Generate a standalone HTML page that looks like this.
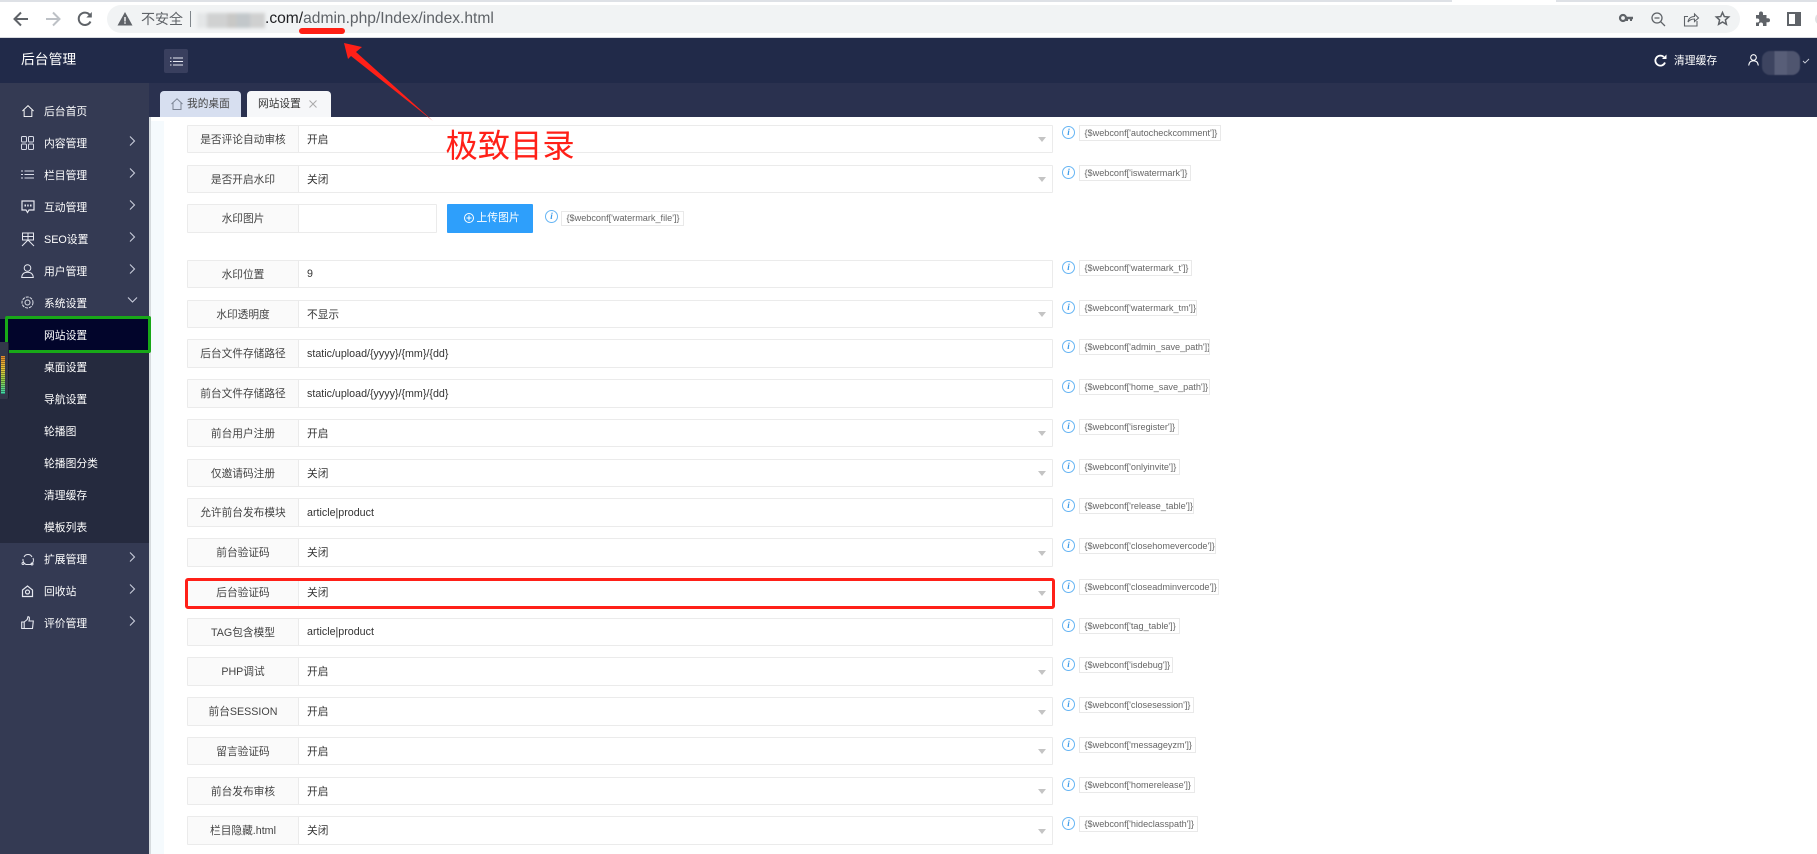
<!DOCTYPE html>
<html lang="zh"><head><meta charset="utf-8"><title>后台管理</title>
<style>
*{box-sizing:border-box;margin:0;padding:0}
html,body{width:1817px;height:854px;overflow:hidden;background:#fff}
body{position:relative;font-family:"Liberation Sans","Noto Sans CJK SC",sans-serif;font-size:10.7px;color:#333;filter:blur(.25px)}
.p{position:absolute}
svg{position:absolute;overflow:visible}
.n{position:absolute;left:44px;color:#fff;line-height:16px;white-space:nowrap;font-size:10.8px;margin-top:1px}
.ch{position:absolute;left:128px;width:9px;height:12px}
.r{position:absolute;left:187px;width:866px;background:#fff;border:1px solid #ebebeb;border-radius:1px}
.l{position:absolute;left:0;top:0;bottom:0;width:111px;background:#fafafa;border-right:1px solid #ebebeb;text-align:center;color:#444;white-space:nowrap;display:flex;align-items:center;justify-content:center}
.v{position:absolute;left:119px;top:0;bottom:0;display:flex;align-items:center;color:#333;white-space:nowrap}
.a{position:absolute;left:850px;top:50%;margin-top:-2px;width:0;height:0;border-left:4px solid transparent;border-right:4px solid transparent;border-top:5px solid #c4c4c4}
.i{position:absolute;left:874px;top:0px;width:13px;height:13px;border:1px solid #66b5f4;border-radius:50%;color:#3d9be9;font:italic bold 9px/11px "Liberation Serif",serif;text-align:center}
.t{position:absolute;left:891px;top:-1px;height:16px;border:1px solid #e9e9e9;background:#fff;color:#666;font-size:9.15px;line-height:14px;padding-left:4.5px;white-space:nowrap;overflow:hidden}
</style></head><body>

<!-- browser chrome -->
<div class="p" style="left:0;top:0;width:1817px;height:38px;background:#fff;border-bottom:1px solid #d8dadf"></div>
<div class="p" style="left:0;top:0;width:1817px;height:2px;background:#dee1e6"></div>
<div class="p" style="left:1452px;top:0;width:104px;height:2px;background:#fff"></div>
<svg style="left:13px;top:11px" width="16" height="16" fill="none" stroke="#5f6368" stroke-width="2"><path d="M15 8H2M8 1.500 1.500 8 8 14.500"/></svg>
<svg style="left:45px;top:11px" width="16" height="16" fill="none" stroke="#bdc1c6" stroke-width="2"><path d="M1 8h13M8 1.500 14.500 8 8 14.500"/></svg>
<svg style="left:77px;top:11px" width="16" height="16" fill="none" stroke="#5f6368" stroke-width="2"><path d="M13.500 10.500A6.200 6.200 0 1 1 12.700 3.800"/><path d="M14.800 1v5.500H9.300" fill="#5f6368" stroke="none"/></svg>
<div class="p" style="left:107px;top:5px;width:1633px;height:28px;border-radius:14px;background:#f1f3f4"></div>
<svg style="left:117px;top:12px" width="16" height="14"><path d="M8 0 15.500 13.500H.5z" fill="#5f6368"/><path d="M7.300 5h1.400v4.500H7.300zM7.300 10.300h1.400v1.500H7.300z" fill="#fff"/></svg>
<div class="p" style="left:141px;top:10px;font-size:14px;line-height:18px;color:#5f6368;white-space:nowrap">不安全</div>
<div class="p" style="left:190px;top:11px;width:1px;height:16px;background:#80868b"></div>
<div class="p" style="left:197px;top:13px;width:68px;height:15px;background:linear-gradient(90deg,#e4e6e7 0 15%,#d0d1d1 15% 45%,#c8c8c6 45% 58%,#c2c7ca 58% 78%,#cfd0d0 78%);filter:blur(1.5px)"></div>
<div class="p" style="left:265px;top:9px;font-size:15.6px;line-height:20px;color:#202124;white-space:nowrap">.com/<span style="color:#5f6368">admin.php/Index/index.html</span></div>
<div class="p" style="left:299px;top:28px;width:46px;height:6px;border-radius:3px;background:#ff1f14"></div>
<!-- right chrome icons -->
<svg style="left:1619px;top:13px" width="14" height="10" fill="#5f6368"><circle cx="4" cy="5" r="3" fill="none" stroke="#5f6368" stroke-width="2.200"/><path d="M7 3.800h7v2.400h-1V8h-2V6.200H9V8H7z"/></svg>
<svg style="left:1651px;top:12px" width="15" height="15" fill="none" stroke="#5f6368" stroke-width="1.300"><circle cx="6" cy="6" r="5"/><path d="M9.800 9.800 14 14M3.500 6h5"/></svg>
<svg style="left:1683px;top:12px" width="16" height="15" fill="none" stroke="#5f6368" stroke-width="1.100"><path d="M14 9v5H1.500V4.500H5M5 10c.5-3.500 3-5.500 6.500-5.500V2L15.500 6l-4 3.500V7c-3 0-5 1-6.500 3z"/></svg>
<svg style="left:1715px;top:11px" width="15" height="15" fill="none" stroke="#5f6368" stroke-width="1.500"><path d="M7.500 1.500 9.300 5.600l4.400.4-3.300 2.900 1 4.400-3.900-2.300-3.900 2.300 1-4.400L1.300 6l4.400-.4z"/></svg>
<svg style="left:1755px;top:11px" width="15" height="15" fill="#5f6368"><path d="M1 4h3V2.500a2 2 0 0 1 4 0V4h3.500v3.300H13a2 2 0 0 1 0 4h-1.500V15H8v-1.500a2 2 0 0 0-4 0V15H1v-3.500h1.300a2 2 0 0 0 0-4H1z"/></svg>
<svg style="left:1787px;top:12px" width="14" height="14" fill="none"><rect x="1" y="1" width="12" height="12" stroke="#5f6368" stroke-width="2"/><rect x="8" y="1" width="5" height="12" fill="#5f6368"/></svg>
<div class="p" style="left:1815px;top:13px;width:12px;height:12px;border-radius:50%;background:#dfe1e3"></div>

<!-- admin header -->
<div class="p" style="left:0;top:38px;width:1817px;height:45px;background:#212a49"></div>
<div class="p" style="left:21px;top:52px;font-size:13.800px;line-height:16px;color:#fff;white-space:nowrap">后台管理</div>
<div class="p" style="left:164px;top:49px;width:24px;height:24px;border-radius:2px;background:#393f5e"></div>
<svg style="left:170px;top:57px" width="13" height="9" stroke="#e8eaf2" stroke-width="1"><path d="M0 1h1.500M3 1h10M0 4.500h1.500M3 4.500h10M0 8h1.500M3 8h10"/></svg>
<svg style="left:1654px;top:54px" width="13" height="13" fill="none" stroke="#fff" stroke-width="1.800"><path d="M11 8.500A5 5 0 1 1 9.800 3"/><path d="M12.500 .5v4.500H8" fill="#fff" stroke="none"/></svg>
<div class="p" style="left:1674px;top:53px;color:#fff;font-size:10.800px;line-height:16px;white-space:nowrap">清理缓存</div>
<svg style="left:1748px;top:54px" width="11" height="12" fill="none" stroke="#fff" stroke-width="1.100"><circle cx="5.500" cy="3.500" r="2.800"/><path d="M.7 11.500C1 8 3 6.800 5.500 6.800s4.500 1.200 4.800 4.700"/></svg>
<div class="p" style="left:1762px;top:51px;width:38px;height:24px;border-radius:8px;background:linear-gradient(90deg,#3d4460 0 33%,#585e78 33% 66%,#4f556f 66%);filter:blur(.6px)"></div>
<svg style="left:1803px;top:59px" width="6" height="4" fill="none" stroke="#cfd2dc" stroke-width=".9"><path d="M0 2 2 4 6 0"/></svg>

<!-- tabs bar -->
<div class="p" style="left:149px;top:83px;width:1668px;height:34px;background:#2a314f"></div>
<div class="p" style="left:160px;top:91px;width:81px;height:26px;background:#d7dff0;border-radius:4px 4px 0 0"></div>
<svg style="left:171px;top:98px" width="12" height="12" fill="none" stroke="#7c8494" stroke-width="1"><path d="M.5 6 6 .8 11.500 6M2 5v6.500h8V5"/></svg>
<div class="p" style="left:187px;top:96px;color:#444;line-height:16px;white-space:nowrap">我的桌面</div>
<div class="p" style="left:247px;top:91px;width:84px;height:26px;background:#f6f7f9;border-radius:4px 4px 0 0"></div>
<div class="p" style="left:258px;top:96px;color:#333;line-height:16px;white-space:nowrap">网站设置</div>
<svg style="left:309px;top:100px" width="8" height="8" stroke="#aaa" stroke-width="1"><path d="M.5.500l7 7M7.500.500l-7 7"/></svg>

<!-- sidebar -->
<div class="p" style="left:0;top:83px;width:149px;height:771px;background:#343a53"></div>
<div class="p" style="left:0;top:319px;width:149px;height:224px;background:#252a3e"></div>
<div class="p" style="left:149px;top:117px;width:2px;height:737px;background:#d6dbde"></div>
<div class="p" style="left:151px;top:121px;width:13px;height:733px;background:#f5fafd"></div>
<div class="p" style="left:0;top:319px;width:6px;height:31px;background:#02052b"></div>
<div class="p" style="left:5px;top:316px;width:146px;height:37px;border:3px solid #18a818;border-radius:2px;background:#02052b"></div>
<!-- side widget -->
<div class="p" style="left:0;top:342px;width:9px;height:57px;background:#33384a;border-radius:0 2px 2px 0;border-right:1px solid #1c2030"></div>
<div class="p" style="left:1px;top:356px;width:4px;height:38px;background:repeating-linear-gradient(180deg,transparent 0 1px,rgba(0,0,0,.35) 1px 2px),linear-gradient(180deg,#e58a2e,#e8c93a 35%,#8fd24a 65%,#3bd8b0)"></div>

<svg style="left:22px;top:105px" width="12" height="12" viewBox="0 0 14 14" fill="none" stroke="#fff" stroke-width="1.100"><path d="M.5 7 7 .7 13.500 7M2.500 6v7.500h9V6"/></svg>
<svg style="left:21px;top:136px" width="13" height="14" fill="none" stroke="#d9dce8" stroke-width="1"><rect x=".5" y=".5" width="5" height="5.500" rx="1"/><rect x="7.500" y=".5" width="5" height="5.500" rx="1"/><rect x=".5" y="8" width="5" height="5.500" rx="1"/><rect x="7.500" y="8" width="5" height="5.500" rx="1"/></svg>
<svg style="left:21px;top:170px" width="13" height="9" stroke="#d9dce8" stroke-width="1"><path d="M0 1h2M3.500 1H13M0 4.500h2M3.500 4.500H13M0 8h2M3.500 8H13"/></svg>
<svg style="left:21px;top:200px" width="14" height="14" fill="none" stroke="#e6e8f0" stroke-width="1.200"><path d="M1 1h12v9H8l-1.500 2.500L5 10H1z"/><path d="M3.500 5.500h1.500M6.200 5.500h1.500M9 5.500h1.500" stroke-width="2"/></svg>
<svg style="left:21px;top:232px" width="14" height="15" fill="none" stroke="#e6e8f0" stroke-width="1"><path d="M1.500 1h11v7h-11zM1.500 4.500h11M7 1v8M1 14l6-6 6 6"/></svg>
<svg style="left:21px;top:264px" width="13" height="14" fill="none" stroke="#e6e8f0" stroke-width="1"><circle cx="6.500" cy="4" r="3.300"/><path d="M.7 13.500C1 10 3 8.300 6.500 8.300s5.500 1.700 5.800 5.200z"/></svg>
<svg style="left:21px;top:296px" width="13" height="13" fill="none" stroke="#dfe2ea" stroke-width="1"><circle cx="6.500" cy="6.500" r="2.500"/><circle cx="6.500" cy="6.500" r="5.500" stroke-dasharray="3 1"/></svg>
<svg style="left:21px;top:552px" width="14" height="14" fill="none" stroke="#e6e8f0" stroke-width="1"><path d="M3 5a4.500 4.500 0 0 1 8 0M12 6a5 5 0 0 1-2 6.500h-5A5 5 0 0 1 2 7"/><circle cx="2" cy="11.500" r="1"/><circle cx="11" cy="12" r="1"/></svg>
<svg style="left:22px;top:585px" width="11" height="12" fill="none" stroke="#e6e8f0" stroke-width="1.200"><path d="M.5 5 5.500 1l5 4v6.500h-10z"/><circle cx="5.500" cy="7" r="2"/></svg>
<svg style="left:21px;top:616px" width="13" height="13" fill="none" stroke="#e6e8f0" stroke-width="1.100"><path d="M.7 6h2.500v6.500H.7zM3.200 6l3-2.500L7 .7c1.500 0 1.800 1.500 1 4.300h4.300l-.8 7.500H3.200"/></svg>

<div class="n" style="top:103px">后台首页</div>
<div class="n" style="top:135px">内容管理</div>
<div class="n" style="top:167px">栏目管理</div>
<div class="n" style="top:199px">互动管理</div>
<div class="n" style="top:231px">SEO设置</div>
<div class="n" style="top:263px">用户管理</div>
<div class="n" style="top:295px">系统设置</div>
<div class="n" style="top:327px">网站设置</div>
<div class="n" style="top:359px">桌面设置</div>
<div class="n" style="top:391px">导航设置</div>
<div class="n" style="top:423px">轮播图</div>
<div class="n" style="top:455px">轮播图分类</div>
<div class="n" style="top:487px">清理缓存</div>
<div class="n" style="top:519px">模板列表</div>
<div class="n" style="top:551px">扩展管理</div>
<div class="n" style="top:583px">回收站</div>
<div class="n" style="top:615px">评价管理</div>

<svg class="ch" style="top:135px" fill="none" stroke="#c9cddb" stroke-width="1.100"><path d="M2 1.500 6.500 6 2 10.500"/></svg>
<svg class="ch" style="top:167px" fill="none" stroke="#c9cddb" stroke-width="1.100"><path d="M2 1.500 6.500 6 2 10.500"/></svg>
<svg class="ch" style="top:199px" fill="none" stroke="#c9cddb" stroke-width="1.100"><path d="M2 1.500 6.500 6 2 10.500"/></svg>
<svg class="ch" style="top:231px" fill="none" stroke="#c9cddb" stroke-width="1.100"><path d="M2 1.500 6.500 6 2 10.500"/></svg>
<svg class="ch" style="top:263px" fill="none" stroke="#c9cddb" stroke-width="1.100"><path d="M2 1.500 6.500 6 2 10.500"/></svg>
<svg class="ch" style="top:294px" fill="none" stroke="#c9cddb" stroke-width="1.100"><path d="M0 3.500 4.500 8 9 3.500"/></svg>
<svg class="ch" style="top:551px" fill="none" stroke="#c9cddb" stroke-width="1.100"><path d="M2 1.500 6.500 6 2 10.500"/></svg>
<svg class="ch" style="top:583px" fill="none" stroke="#c9cddb" stroke-width="1.100"><path d="M2 1.500 6.500 6 2 10.500"/></svg>
<svg class="ch" style="top:615px" fill="none" stroke="#c9cddb" stroke-width="1.100"><path d="M2 1.500 6.500 6 2 10.500"/></svg>

<!-- form rows -->
<div class="r" style="top:125px;height:28px"><div class="l">是否评论自动审核</div><div class="v">开启</div><div class="a"></div><div class="i">i</div><div class="t" style="width:142px">{$webconf['autocheckcomment']}</div></div>
<div class="r" style="top:165px;height:28px"><div class="l">是否开启水印</div><div class="v">关闭</div><div class="a"></div><div class="i">i</div><div class="t" style="width:112px">{$webconf['iswatermark']}</div></div>

<div class="r" style="top:204px;height:29px;width:250px"><div class="l">水印图片</div></div>
<div class="p" style="left:447px;top:204px;width:86px;height:29px;background:#2e9ffb;border-radius:1px;color:#fff;font-size:10.800px;line-height:29px;padding-left:29.500px;white-space:nowrap">上传图片</div>
<svg style="left:464px;top:213px" width="10" height="10" fill="none" stroke="#fff" stroke-width="1"><circle cx="5" cy="5" r="4.500"/><path d="M5 2.500v5M2.500 5h5"/></svg>
<div class="i" style="left:545px;top:210px">i</div>
<div class="t" style="left:561px;top:211px;width:123px;height:15px;line-height:13px">{$webconf['watermark_file']}</div>

<div class="r" style="top:260px;height:28px"><div class="l">水印位置</div><div class="v">9</div><div class="i">i</div><div class="t" style="width:113px">{$webconf['watermark_t']}</div></div>
<div class="r" style="top:300px;height:28px"><div class="l">水印透明度</div><div class="v">不显示</div><div class="a"></div><div class="i">i</div><div class="t" style="width:118px">{$webconf['watermark_tm']}</div></div>
<div class="r" style="top:339px;height:29px"><div class="l">后台文件存储路径</div><div class="v">static/upload/{yyyy}/{mm}/{dd}</div><div class="i">i</div><div class="t" style="width:131px">{$webconf['admin_save_path']}</div></div>
<div class="r" style="top:379px;height:29px"><div class="l">前台文件存储路径</div><div class="v">static/upload/{yyyy}/{mm}/{dd}</div><div class="i">i</div><div class="t" style="width:131px">{$webconf['home_save_path']}</div></div>
<div class="r" style="top:419px;height:28px"><div class="l">前台用户注册</div><div class="v">开启</div><div class="a"></div><div class="i">i</div><div class="t" style="width:100px">{$webconf['isregister']}</div></div>
<div class="r" style="top:459px;height:28px"><div class="l">仅邀请码注册</div><div class="v">关闭</div><div class="a"></div><div class="i">i</div><div class="t" style="width:101px">{$webconf['onlyinvite']}</div></div>
<div class="r" style="top:498px;height:29px"><div class="l">允许前台发布模块</div><div class="v">article|product</div><div class="i">i</div><div class="t" style="width:115px">{$webconf['release_table']}</div></div>
<div class="r" style="top:538px;height:29px"><div class="l">前台验证码</div><div class="v">关闭</div><div class="a"></div><div class="i">i</div><div class="t" style="width:137px">{$webconf['closehomevercode']}</div></div>
<div class="r" style="top:579px;height:28px"><div class="l" style="padding-bottom:1px">后台验证码</div><div class="v" style="padding-bottom:1px">关闭</div><div class="a"></div><div class="i">i</div><div class="t" style="width:140px">{$webconf['closeadminvercode']}</div></div>
<div class="r" style="top:618px;height:28px"><div class="l">TAG包含模型</div><div class="v">article|product</div><div class="i">i</div><div class="t" style="width:101px">{$webconf['tag_table']}</div></div>
<div class="r" style="top:657px;height:29px"><div class="l">PHP调试</div><div class="v">开启</div><div class="a"></div><div class="i">i</div><div class="t" style="width:94px">{$webconf['isdebug']}</div></div>
<div class="r" style="top:697px;height:29px"><div class="l">前台SESSION</div><div class="v">开启</div><div class="a"></div><div class="i">i</div><div class="t" style="width:115px">{$webconf['closesession']}</div></div>
<div class="r" style="top:737px;height:28px"><div class="l">留言验证码</div><div class="v">开启</div><div class="a"></div><div class="i">i</div><div class="t" style="width:117px">{$webconf['messageyzm']}</div></div>
<div class="r" style="top:777px;height:28px"><div class="l">前台发布审核</div><div class="v">开启</div><div class="a"></div><div class="i">i</div><div class="t" style="width:116px">{$webconf['homerelease']}</div></div>
<div class="r" style="top:816px;height:29px"><div class="l">栏目隐藏.html</div><div class="v">关闭</div><div class="a"></div><div class="i">i</div><div class="t" style="width:119px">{$webconf['hideclasspath']}</div></div>

<!-- annotations -->
<div class="p" style="left:185px;top:578px;width:870px;height:31px;border:3px solid #ff2018;border-radius:3px"></div>
<svg style="left:0;top:0" width="1817" height="854"><path d="M344 43 362 47 356 52 433 121 351 56 348 59z" fill="#ff2018"/></svg>
<div class="p" style="left:445.500px;top:122px;font-size:32.300px;line-height:44px;color:#ff2018;white-space:nowrap;font-family:'Noto Sans CJK SC',sans-serif">极致目录</div>
</body></html>
